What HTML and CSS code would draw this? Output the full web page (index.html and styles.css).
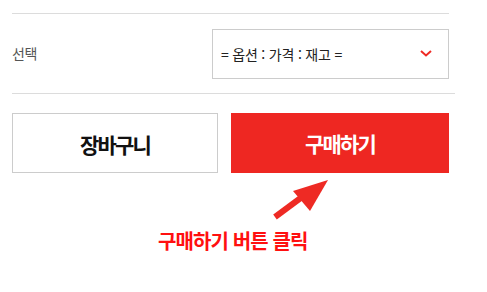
FILE: index.html
```html
<!DOCTYPE html>
<html lang="ko">
<head>
<meta charset="utf-8">
<link rel="stylesheet" href="styles.css">
</head>
<body>
<div class="page">
  <div class="line line-top"></div>
  <div class="option-row">
    <div class="label">선택</div>
    <div class="select">
      <span class="select-text">= 옵션 : 가격 : 재고 =</span>
      <svg class="chev" width="12" height="7" viewBox="0 0 12 7"><path d="M1 1 L6 5.5 L11 1" fill="none" stroke="#ee2a24" stroke-width="2"/></svg>
    </div>
  </div>
  <div class="line line-bottom"></div>
  <div class="buttons">
    <div class="btn btn-cart">장바구니</div>
    <div class="btn btn-buy">구매하기</div>
  </div>
  <div class="annotation">
    <svg class="arrow" width="70" height="50" viewBox="0 0 70 50"><line x1="5" y1="47" x2="32" y2="27" stroke="#ee2a24" stroke-width="6"/><polygon points="58,10 23,21 40,41" fill="#ee2a24"/></svg>
    <div class="note">구매하기 버튼 클릭</div>
  </div>
</div>
</body>
</html>
```
FILE: styles.css
```css
html, body {
  margin: 0;
  padding: 0;
  background: #fff;
}
body {
  font-family: "Noto Sans CJK KR", "Noto Sans", sans-serif;
  width: 487px;
  height: 292px;
  overflow: hidden;
}
.page {
  padding-left: 12px;
}
.line {
  height: 1px;
  background: #dcdcdc;
}
.line-top {
  margin-top: 13px;
  width: 437px;
}
.line-bottom {
  width: 443px;
}
.option-row {
  display: flex;
  align-items: center;
  padding: 15px 0 14px;
}
.label {
  width: 200px;
  font-size: 14px;
  color: #555;
  letter-spacing: -0.5px;
  margin-top: -2px;
}
.select {
  box-sizing: border-box;
  width: 237px;
  height: 50px;
  border: 1px solid #cccccc;
  display: flex;
  align-items: center;
  justify-content: space-between;
  padding: 0 16px 0 8px;
}
.select-text {
  font-size: 14px;
  color: #222;
  letter-spacing: -0.2px;
}
.chev {
  display: block;
  margin-top: -2px;
}
.buttons {
  display: flex;
  gap: 13px;
  margin-top: 19px;
}
.btn {
  box-sizing: border-box;
  height: 60px;
  display: flex;
  align-items: center;
  justify-content: center;
  font-weight: 700;
  font-size: 21px;
  letter-spacing: -1.8px;
}
.btn-cart {
  width: 206px;
  border: 1px solid #cccccc;
  color: #111;
  padding-top: 1px;
}
.btn-buy {
  width: 218px;
  background: #ee2722;
  color: #fff;
}
.annotation {
  position: relative;
  height: 100px;
}
.arrow {
  position: absolute;
  left: 258px;
  top: -3px;
}
.note {
  padding-top: 53px;
  padding-left: 146px;
  font-size: 20px;
  font-weight: 700;
  color: #ff1010;
  letter-spacing: -0.9px;
}
```
